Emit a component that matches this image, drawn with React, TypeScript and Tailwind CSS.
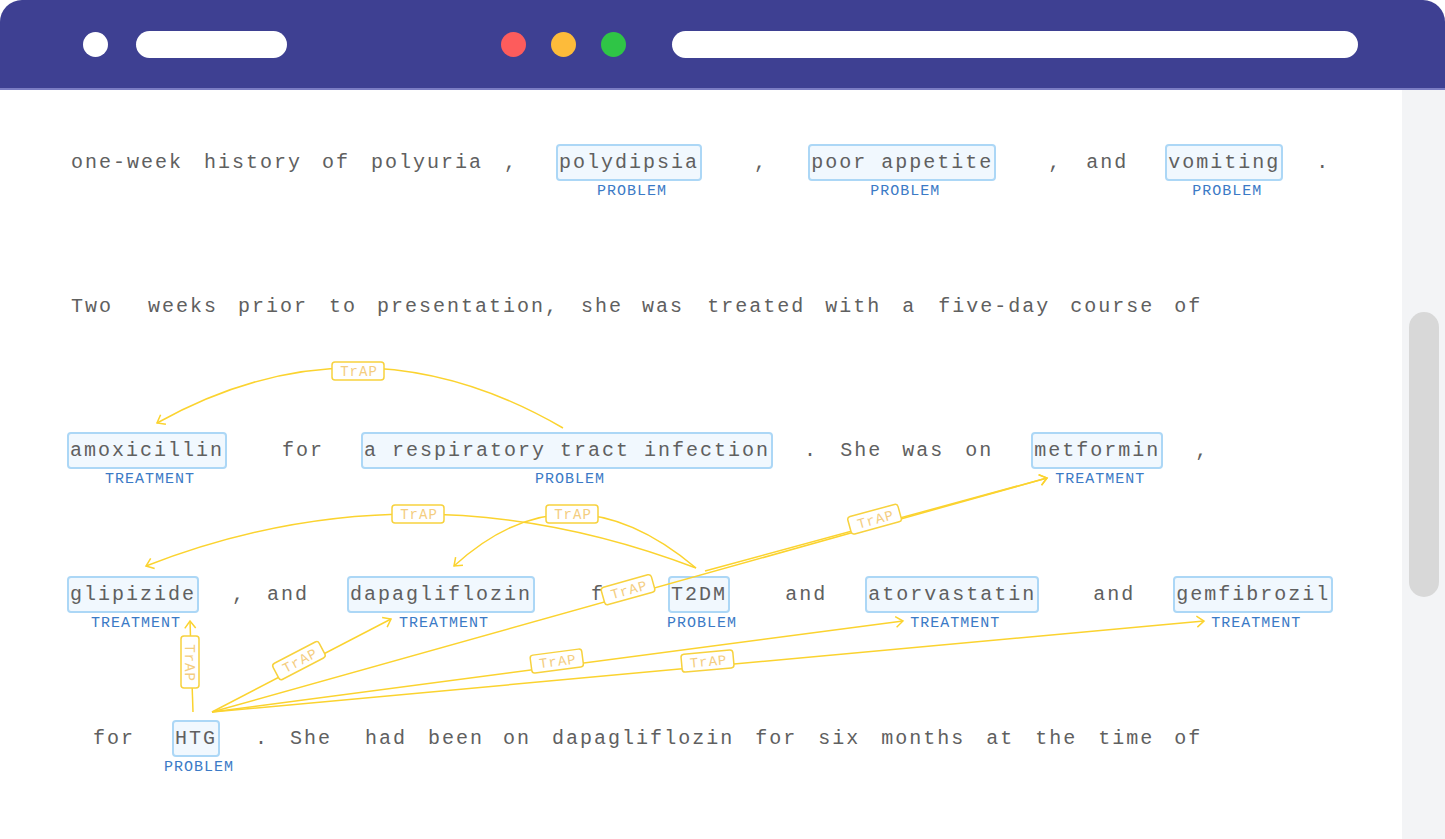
import React from "react";

/** Relation view: tokens in rows, entity chips with labels, TrAP arrows drawn over them. */

type Tok = { t: string; ml: string; ent?: "PROBLEM" | "TREATMENT" };

const rows: Tok[][] = [
  [
    { t: "one-week", ml: "ml-[71px]" },
    { t: "history", ml: "ml-[21px]" },
    { t: "of", ml: "ml-[20px]" },
    { t: "polyuria", ml: "ml-[21px]" },
    { t: ",", ml: "ml-[21px]" },
    { t: "polydipsia", ml: "ml-[38px]", ent: "PROBLEM" },
    { t: ",", ml: "ml-[52px]" },
    { t: "poor appetite", ml: "ml-[40px]", ent: "PROBLEM" },
    { t: ",", ml: "ml-[52px]" },
    { t: "and", ml: "ml-[24px]" },
    { t: "vomiting", ml: "ml-[37px]", ent: "PROBLEM" },
    { t: ".", ml: "ml-[33px]" },
  ],
  [
    { t: "Two", ml: "ml-[71px]" },
    { t: "weeks", ml: "ml-[35px]" },
    { t: "prior", ml: "ml-[20px]" },
    { t: "to", ml: "ml-[21px]" },
    { t: "presentation,", ml: "ml-[20px]" },
    { t: "she", ml: "ml-[22px]" },
    { t: "was", ml: "ml-[19px]" },
    { t: "treated", ml: "ml-[23px]" },
    { t: "with", ml: "ml-[20px]" },
    { t: "a", ml: "ml-[21px]" },
    { t: "five-day", ml: "ml-[22px]" },
    { t: "course", ml: "ml-[20px]" },
    { t: "of", ml: "ml-[20px]" },
  ],
  [
    { t: "amoxicillin", ml: "ml-[67px]", ent: "TREATMENT" },
    { t: "for", ml: "ml-[55px]" },
    { t: "a respiratory tract infection", ml: "ml-[37px]", ent: "PROBLEM" },
    { t: ".", ml: "ml-[31px]" },
    { t: "She", ml: "ml-[22px]" },
    { t: "was", ml: "ml-[20px]" },
    { t: "on", ml: "ml-[21px]" },
    { t: "metformin", ml: "ml-[38px]", ent: "TREATMENT" },
    { t: ",", ml: "ml-[32px]" },
  ],
  [
    { t: "glipizide", ml: "ml-[67px]", ent: "TREATMENT" },
    { t: ",", ml: "ml-[33px]" },
    { t: "and", ml: "ml-[21px]" },
    { t: "dapagliflozin", ml: "ml-[38px]", ent: "TREATMENT" },
    { t: "for", ml: "ml-[56px]" },
    { t: "T2DM", ml: "ml-[35px]", ent: "PROBLEM" },
    { t: "and", ml: "ml-[55px]" },
    { t: "atorvastatin", ml: "ml-[38px]", ent: "TREATMENT" },
    { t: "and", ml: "ml-[54px]" },
    { t: "gemfibrozil", ml: "ml-[38px]", ent: "TREATMENT" },
  ],
  [
    { t: "for", ml: "ml-[93px]" },
    { t: "HTG", ml: "ml-[37px]", ent: "PROBLEM" },
    { t: ".", ml: "ml-[35px]" },
    { t: "She", ml: "ml-[21px]" },
    { t: "had", ml: "ml-[33px]" },
    { t: "been", ml: "ml-[21px]" },
    { t: "on", ml: "ml-[19px]" },
    { t: "dapagliflozin", ml: "ml-[21px]" },
    { t: "for", ml: "ml-[21px]" },
    { t: "six", ml: "ml-[21px]" },
    { t: "months", ml: "ml-[21px]" },
    { t: "at", ml: "ml-[21px]" },
    { t: "the", ml: "ml-[21px]" },
    { t: "time", ml: "ml-[21px]" },
    { t: "of", ml: "ml-[20px]" },
  ],
];

const LINE = "#fbd32f";

// curved relations: from, control, to, label centre
const curves = [
  { d: [563, 428, 360, 310, 157, 423], lx: 358, ly: 371 },
  { d: [696, 568, 415, 461, 146, 566], lx: 418, ly: 514 },
  { d: [696, 568, 569, 461, 454, 566], lx: 572, ly: 514 },
];

// straight relations: from -> to
const lines = [
  [212, 712, 1047, 478],
  [705, 571, 1047, 478],
  [212, 712, 391, 619],
  [212, 712, 903, 621],
  [212, 712, 1204, 621],
];

function Head({ x, y, fx, fy }: { x: number; y: number; fx: number; fy: number }) {
  const a = Math.atan2(y - fy, x - fx);
  const L = 9;
  const s = 0.65;
  const p1 = `${x - L * Math.cos(a - s)},${y - L * Math.sin(a - s)}`;
  const p2 = `${x - L * Math.cos(a + s)},${y - L * Math.sin(a + s)}`;
  return <polyline points={`${p1} ${x},${y} ${p2}`} fill="none" stroke={LINE} strokeWidth={1.5} />;
}

function Tag({ x, y, r }: { x: number; y: number; r: number }) {
  return (
    <g transform={`translate(${x} ${y}) rotate(${r})`}>
      <rect x={-26} y={-9} width={52} height={18} rx={3} fill="white" stroke="#f7d23e" strokeWidth={1.5} />
      <text
        x={1}
        y={1}
        textAnchor="middle"
        dominantBaseline="central"
        fontSize={14}
        letterSpacing={1}
        fontFamily="'Liberation Mono', monospace"
        fill="#f4cd80"
      >
        TrAP
      </text>
    </g>
  );
}

function Arrows() {
  return (
    <svg className="pointer-events-none absolute left-0 top-0" width={1445} height={839}>
      {curves.map(({ d }, i) => (
        <g key={i}>
          <path d={`M${d[0]} ${d[1]} Q${d[2]} ${d[3]} ${d[4]} ${d[5]}`} fill="none" stroke={LINE} strokeWidth={1.5} />
          <Head x={d[4]} y={d[5]} fx={d[2]} fy={d[3]} />
        </g>
      ))}
      {lines.map(([x1, y1, x2, y2], i) => (
        <g key={i}>
          <line x1={x1} y1={y1} x2={x2} y2={y2} stroke={LINE} strokeWidth={1.5} />
          <Head x={x2} y={y2} fx={x1} fy={y1} />
        </g>
      ))}
      <line x1={193} y1={712} x2={190} y2={621} stroke={LINE} strokeWidth={1.5} />
      <Head x={190} y={621} fx={193} fy={712} />

      {curves.map(({ lx, ly }, i) => (
        <Tag key={i} x={lx} y={ly} r={0} />
      ))}
      {lines.map(([x1, y1, x2, y2], i) => {
        const a = Math.atan2(y2 - y1, x2 - x1);
        const mx = (x1 + x2) / 2 + 5.5 * Math.sin(a);
        const my = (y1 + y2) / 2 - 5.5 * Math.cos(a);
        return <Tag key={i} x={mx} y={my} r={(a * 180) / Math.PI} />;
      })}
      <Tag x={190} y={662} r={90} />
    </svg>
  );
}

function Token({ t, ml, ent }: Tok) {
  if (!ent) return <span className={`${ml} shrink-0 whitespace-pre leading-[37px]`}>{t}</span>;
  return (
    <span
      className={`${ml} relative h-[37px] shrink-0 whitespace-pre rounded-[4px] border-2 border-[#acd7f6] bg-[#f1f8fe] px-[1px] leading-[33px]`}
    >
      {t}
      <span className="absolute left-[calc(50%+3px)] top-full mt-[4px] -translate-x-1/2 text-[15px] leading-[17px] tracking-[1px] text-[#3b7ac6]">
        {ent}
      </span>
    </span>
  );
}

export default function App() {
  return (
    <div className="relative h-[839px] w-full overflow-hidden bg-white font-['Liberation_Mono',monospace]">
      <header className="flex h-[90px] items-center rounded-t-[22px] border-b-2 border-[#7b7dc3] bg-[#3e4092] pl-[83px]">
        <div className="h-[25px] w-[25px] rounded-full bg-white" />
        <div className="ml-[28px] h-[27px] w-[151px] rounded-full bg-white" />
        <div className="ml-[214px] flex gap-[25px]">
          <div className="h-[25px] w-[25px] rounded-full bg-[#fd5c5c]" />
          <div className="h-[25px] w-[25px] rounded-full bg-[#fdbb3a]" />
          <div className="h-[25px] w-[25px] rounded-full bg-[#2fc546]" />
        </div>
        <div className="ml-[46px] h-[27px] w-[686px] rounded-full bg-white" />
      </header>

      <div className="flex h-[749px]">
        <main className="flex flex-1 flex-col gap-[107px] pt-[54px] text-[20px] tracking-[2px] text-[#606060]">
          {rows.map((row, i) => (
            <div key={i} className="flex h-[37px] items-center">
              {row.map((tok, j) => (
                <Token key={j} {...tok} />
              ))}
            </div>
          ))}
        </main>
        <aside className="w-[43px] bg-[#f3f4f6] pl-[7px] pt-[222px]">
          <div className="h-[285px] w-[30px] rounded-full bg-[#d8d8d8]" />
        </aside>
      </div>

      <Arrows />
    </div>
  );
}
